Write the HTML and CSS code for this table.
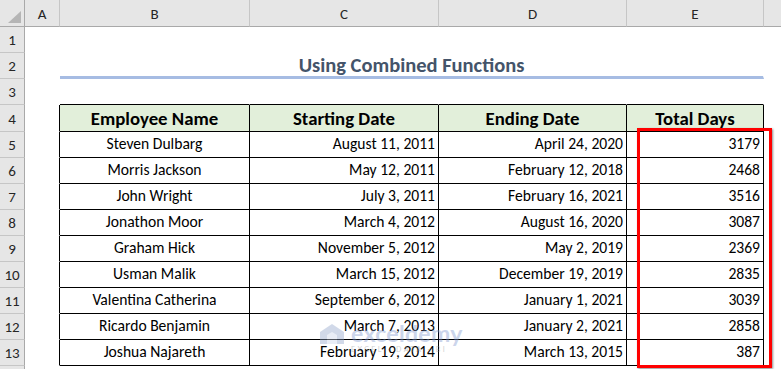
FILE: index.html
```html
<!DOCTYPE html>
<html>
<head>
<meta charset="utf-8">
<link rel="stylesheet" href="styles.css">
</head>
<body>
<div class="sheet">
  <div class="corner"><svg width="14" height="13" viewBox="0 0 14 13"><polygon points="0,12 13,12 13,0" fill="#b5b5b5"/></svg></div>
  <div class="ch">A</div><div class="ch">B</div><div class="ch">C</div><div class="ch">D</div><div class="ch">E</div><div class="ch ch-last"></div>

  <div class="rh">1</div><div class="c"></div><div class="c"></div><div class="c"></div><div class="c"></div><div class="c"></div><div class="c"></div>

  <div class="rh">2</div><div class="c"></div><div class="c title">Using Combined Functions</div><div class="c"></div>

  <div class="rh">3</div><div class="c"></div><div class="c abv"></div><div class="c abv"></div><div class="c abv"></div><div class="c abv"></div><div class="c"></div>

  <div class="rh">4</div><div class="c lt"></div><div class="c t hd">Employee Name</div><div class="c t hd">Starting Date</div><div class="c t hd">Ending Date</div><div class="c t hd">Total Days</div><div class="c"></div>

  <div class="rh">5</div><div class="c lt"></div><div class="c t ctr">Steven Dulbarg</div><div class="c t r">August 11, 2011</div><div class="c t r">April 24, 2020</div><div class="c t r">3179</div><div class="c"></div>
  <div class="rh">6</div><div class="c lt"></div><div class="c t ctr">Morris Jackson</div><div class="c t r">May 12, 2011</div><div class="c t r">February 12, 2018</div><div class="c t r">2468</div><div class="c"></div>
  <div class="rh">7</div><div class="c lt"></div><div class="c t ctr">John Wright</div><div class="c t r">July 3, 2011</div><div class="c t r">February 16, 2021</div><div class="c t r">3516</div><div class="c"></div>
  <div class="rh">8</div><div class="c lt"></div><div class="c t ctr">Jonathon Moor</div><div class="c t r">March 4, 2012</div><div class="c t r">August 16, 2020</div><div class="c t r">3087</div><div class="c"></div>
  <div class="rh">9</div><div class="c lt"></div><div class="c t ctr">Graham Hick</div><div class="c t r">November 5, 2012</div><div class="c t r">May 2, 2019</div><div class="c t r">2369</div><div class="c"></div>
  <div class="rh">10</div><div class="c lt"></div><div class="c t ctr">Usman Malik</div><div class="c t r">March 15, 2012</div><div class="c t r">December 19, 2019</div><div class="c t r">2835</div><div class="c"></div>
  <div class="rh">11</div><div class="c lt"></div><div class="c t ctr">Valentina Catherina</div><div class="c t r">September 6, 2012</div><div class="c t r">January 1, 2021</div><div class="c t r">3039</div><div class="c"></div>
  <div class="rh">12</div><div class="c lt"></div><div class="c t ctr">Ricardo Benjamin</div><div class="c t r">March 7, 2013</div><div class="c t r">January 2, 2021</div><div class="c t r">2858</div><div class="c"></div>
  <div class="rh">13</div><div class="c lt"></div><div class="c t ctr">Joshua Najareth</div><div class="c t r">February 19, 2014</div><div class="c t r">March 13, 2015</div><div class="c t r">387</div><div class="c"></div>

  <div class="rh"></div><div class="c"></div><div class="c"></div><div class="c"></div><div class="c"></div><div class="c"></div><div class="c"></div>

  <div class="highlight"></div>
  <div class="watermark">
    <svg class="wm-icon" width="28" height="24" viewBox="0 0 28 24"><polygon points="2,10 14,2 26,10 26,22 2,22" fill="#8fa3c9"/><polygon points="9,13 14,10 19,13 19,22 9,22" fill="#c9d4ea"/></svg>
    <div class="wm-text">
      <div class="wm-name">exceldemy</div>
      <div class="wm-sub">EXCEL · DATA · BI</div>
    </div>
  </div>
</div>
</body>
</html>
```

FILE: styles.css
```css
* { box-sizing: border-box; }
html, body { margin: 0; padding: 0; background: #fff; }
body { width: 781px; height: 369px; overflow: hidden; }

.sheet {
  position: relative;
  display: grid;
  grid-template-columns: 25px 35px 190px 189px 188px 137px 17px;
  grid-template-rows: 27px repeat(3, 26px) 27px repeat(9, 26px) 4px;
  font-family: Carlito, Lato, "Liberation Sans", sans-serif;
  color: #000;
}

.corner {
  background: #e6e6e6;
  border-right: 1px solid #a9a9a9;
  border-bottom: 1px solid #a9a9a9;
  display: flex;
  align-items: flex-end;
  justify-content: flex-end;
  padding: 0 2px 2px 0;
}

.ch {
  background: #e6e6e6;
  border-right: 1px solid #c6c6c6;
  border-bottom: 1px solid #a9a9a9;
  display: flex;
  align-items: center;
  justify-content: center;
  font-size: 15px;
  color: #262626;
  padding-top: 1px;
}
.ch-last { border-right: none; }

.rh {
  background: #e6e6e6;
  border-right: 1px solid #a9a9a9;
  border-bottom: 1px solid #c6c6c6;
  display: flex;
  align-items: flex-end;
  justify-content: center;
  font-size: 15px;
  color: #262626;
  padding-bottom: 3px;
  line-height: 17px;
}

.c {
  display: flex;
  align-items: flex-end;
  padding: 0 3px 4px;
  white-space: nowrap;
  overflow: hidden;
  font-size: 15.6px;
  line-height: 18px;
  border-right: 1px solid transparent;
  border-bottom: 1px solid transparent;
}

.t { border-right-color: #000; border-bottom-color: #000; }
.lt { border-right-color: #000; }
.abv { border-bottom-color: #000; }
.ctr { justify-content: center; }
.r { justify-content: flex-end; }

.hd {
  background: #e2efda;
  font-weight: 700;
  font-size: 18.8px;
  justify-content: center;
  padding-bottom: 2px;
  line-height: 20px;
}

.title {
  grid-column: span 4;
  justify-content: center;
  font-weight: 700;
  font-size: 20.5px;
  color: #44546a;
  border-bottom: 3px solid #a6bce3;
  padding-bottom: 0;
  line-height: 22px;
  overflow: visible;
}

.highlight {
  position: absolute;
  left: 637px;
  top: 128px;
  width: 135px;
  height: 240px;
  border: 3px solid #ff0000;
  box-shadow: 1px 1px 2px rgba(0, 0, 0, 0.45);
  pointer-events: none;
}

.watermark {
  position: absolute;
  left: 318px;
  top: 321px;
  display: flex;
  align-items: flex-start;
  gap: 5px;
  opacity: 0.4;
  pointer-events: none;
}
.wm-icon { margin-top: 1px; }
.wm-text { display: flex; flex-direction: column; }
.wm-name {
  font-family: Lato, sans-serif;
  font-weight: 700;
  font-size: 23px;
  line-height: 24px;
  color: #7f97cf;
  letter-spacing: 0.3px;
}
.wm-sub {
  font-family: Lato, sans-serif;
  font-size: 7px;
  letter-spacing: 2.4px;
  color: #8a8a8a;
  line-height: 9px;
}
```
